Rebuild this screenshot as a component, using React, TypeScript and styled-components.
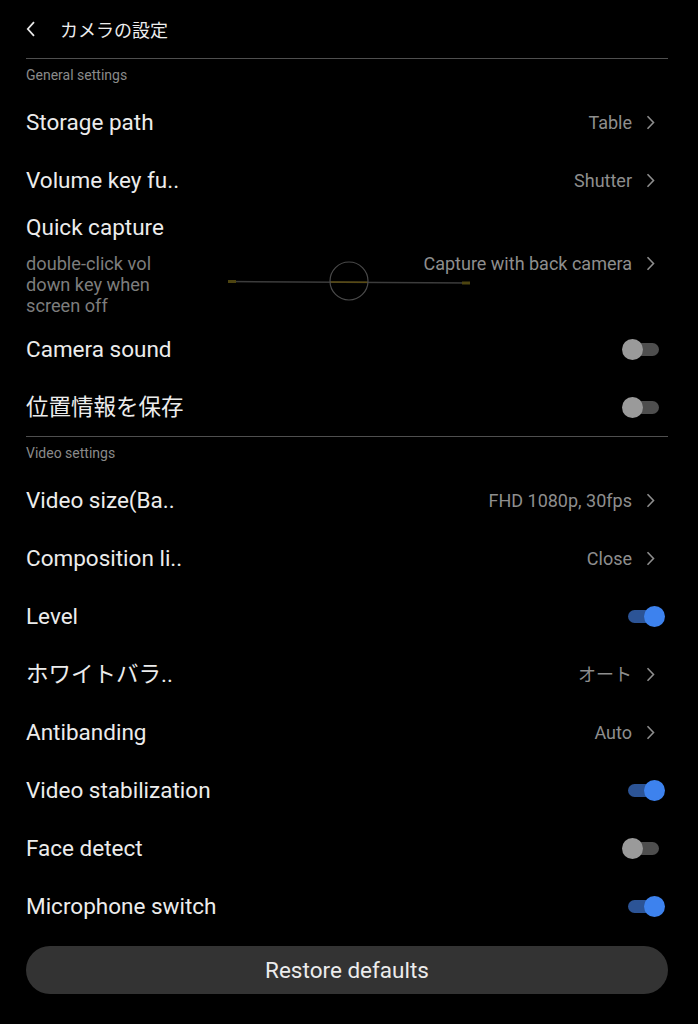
import React, { useState } from "react";
import styled, { createGlobalStyle } from "styled-components";

const GlobalStyle = createGlobalStyle`
    html, body {
        margin: 0;
        padding: 0;
        background: #000;
    }
    * {
        box-sizing: border-box;
    }
`;

const PageStyled = styled.div`
    width: 698px;
    height: 1024px;
    background: #000;
    padding: 0 30px 0 26px;
    font-family: Roboto, "Noto Sans CJK JP", sans-serif;
    color: #ececec;
    overflow: hidden;
`;

const HeaderStyled = styled.div`
    height: 59px;
    display: flex;
    align-items: center;
    padding-bottom: 1px;
    border-bottom: 1px solid #4f4f4f;
`;

const BackStyled = styled.div`
    width: 34px;
    height: 16px;
    display: flex;
    align-items: center;
`;

const HeaderTitleStyled = styled.span`
    font-size: 18px;
    color: #ededed;
`;

const SectionLabelStyled = styled.div`
    height: 34px;
    padding-top: 8px;
    font-size: 14px;
    line-height: 16px;
    color: #8a8a8a;
`;

const DividerStyled = styled.div`
    height: 1px;
    background: #4f4f4f;
`;

const RowStyled = styled.div`
    height: 58px;
    display: flex;
    align-items: center;
    justify-content: space-between;
`;

const TitleStyled = styled.div`
    font-size: 22.5px;
    line-height: 26px;
    color: #ececec;
    white-space: nowrap;
`;

const ValueGroupStyled = styled.div`
    display: flex;
    align-items: center;
    gap: 14px;
    padding-right: 13px;
`;

const ValueStyled = styled.span`
    font-size: 18px;
    line-height: 21px;
    color: #8e8e8e;
    white-space: nowrap;
`;

const QuickBlockStyled = styled.div`
    position: relative;
    height: 111px;
    padding-top: 5px;
`;

const QuickBodyStyled = styled.div`
    margin-top: 13px;
    display: flex;
    justify-content: space-between;
    align-items: flex-start;
`;

const SubTextStyled = styled.div`
    font-size: 18.2px;
    line-height: 21px;
    color: #7d7d7d;
    width: 160px;
`;

/* stray slider widget drawn over the quick capture row */
const SliderOverlayStyled = styled.svg`
    position: absolute;
    left: 174px;
    top: 51px;
`;

const ToggleStyled = styled.div<{ $on: boolean }>`
    position: relative;
    width: 43px;
    height: 21px;
    margin-right: 3px;
    cursor: pointer;

    &::before {
        content: "";
        position: absolute;
        left: 6px;
        right: 6px;
        top: 4px;
        height: 13px;
        border-radius: 7px;
        background: ${(props) => (props.$on ? "#2c5496" : "#4e4e4e")};
    }

    &::after {
        content: "";
        position: absolute;
        top: 0;
        left: ${(props) => (props.$on ? "22px" : "0")};
        width: 21px;
        height: 21px;
        border-radius: 50%;
        background: ${(props) => (props.$on ? "#3d82ee" : "#9a9a9a")};
    }
`;

const ButtonStyled = styled.div`
    margin-top: 11px;
    height: 48px;
    border-radius: 24px;
    background: #333333;
    display: flex;
    align-items: center;
    justify-content: center;
    font-size: 22.5px;
    color: #ececec;
`;

const Chevron = ({ color = "#8e8e8e" }: { color?: string }) => (
    <svg width="9" height="15" viewBox="0 0 9 15">
        <path d="M1.5 1.2 L7.5 7.5 L1.5 13.8" fill="none" stroke={color} strokeWidth="1.6" />
    </svg>
);

type TSetting = {
    title: string;
    value?: string;
    toggle?: boolean;
};

const VIDEO_SETTINGS: TSetting[] = [
    { title: "Video size(Ba..", value: "FHD 1080p, 30fps" },
    { title: "Composition li..", value: "Close" },
    { title: "Level", toggle: true },
    { title: "ホワイトバラ..", value: "オート" },
    { title: "Antibanding", value: "Auto" },
    { title: "Video stabilization", toggle: true },
    { title: "Face detect", toggle: false },
    { title: "Microphone switch", toggle: true },
];

function SettingRow({ item, onToggle }: { item: TSetting; onToggle: () => void }) {
    return (
        <RowStyled>
            <TitleStyled>{item.title}</TitleStyled>
            {item.value !== undefined ? (
                <ValueGroupStyled>
                    <ValueStyled>{item.value}</ValueStyled>
                    <Chevron />
                </ValueGroupStyled>
            ) : (
                <ToggleStyled $on={!!item.toggle} onClick={onToggle} />
            )}
        </RowStyled>
    );
}

export default function App() {
    const [general, setGeneral] = useState<TSetting[]>([
        { title: "Camera sound", toggle: false },
        { title: "位置情報を保存", toggle: false },
    ]);
    const [video, setVideo] = useState<TSetting[]>(VIDEO_SETTINGS);

    const flip = (list: TSetting[], index: number) =>
        list.map((item, i) => (i === index ? { ...item, toggle: !item.toggle } : item));

    return (
        <>
            <GlobalStyle />
            <PageStyled>
                <HeaderStyled>
                    <BackStyled>
                        <svg width="10" height="16" viewBox="0 0 10 16">
                            <path d="M8 1.2 L1.8 8 L8 14.8" fill="none" stroke="#e6e6e6" strokeWidth="1.8" />
                        </svg>
                    </BackStyled>
                    <HeaderTitleStyled>カメラの設定</HeaderTitleStyled>
                </HeaderStyled>

                {/* General settings */}
                <SectionLabelStyled>General settings</SectionLabelStyled>
                <SettingRow item={{ title: "Storage path", value: "Table" }} onToggle={() => {}} />
                <SettingRow item={{ title: "Volume key fu..", value: "Shutter" }} onToggle={() => {}} />

                <QuickBlockStyled>
                    <TitleStyled>Quick capture</TitleStyled>
                    <QuickBodyStyled>
                        <SubTextStyled>double-click vol down key when screen off</SubTextStyled>
                        <ValueGroupStyled>
                            <ValueStyled>Capture with back camera</ValueStyled>
                            <Chevron />
                        </ValueGroupStyled>
                    </QuickBodyStyled>
                    <SliderOverlayStyled width="300" height="44" viewBox="0 0 300 44">
                        <line x1="28" y1="21.5" x2="270" y2="23" stroke="#3c3c3c" strokeWidth="1.5" />
                        <line x1="130" y1="22" x2="168" y2="22.3" stroke="#5a4b12" strokeWidth="1.6" />
                        <rect x="28" y="20" width="8" height="3" fill="#4d4410" />
                        <rect x="262" y="21.5" width="8" height="3" fill="#4d4410" />
                        <circle cx="149" cy="21" r="19" fill="none" stroke="#4a4a4a" strokeWidth="1.2" />
                    </SliderOverlayStyled>
                </QuickBlockStyled>

                {general.map((item, index) => (
                    <SettingRow
                        key={item.title}
                        item={item}
                        onToggle={() => setGeneral((prev) => flip(prev, index))}
                    />
                ))}

                <DividerStyled />

                {/* Video settings */}
                <SectionLabelStyled>Video settings</SectionLabelStyled>
                {video.map((item, index) => (
                    <SettingRow
                        key={item.title}
                        item={item}
                        onToggle={() => setVideo((prev) => flip(prev, index))}
                    />
                ))}

                <ButtonStyled>Restore defaults</ButtonStyled>
            </PageStyled>
        </>
    );
}
